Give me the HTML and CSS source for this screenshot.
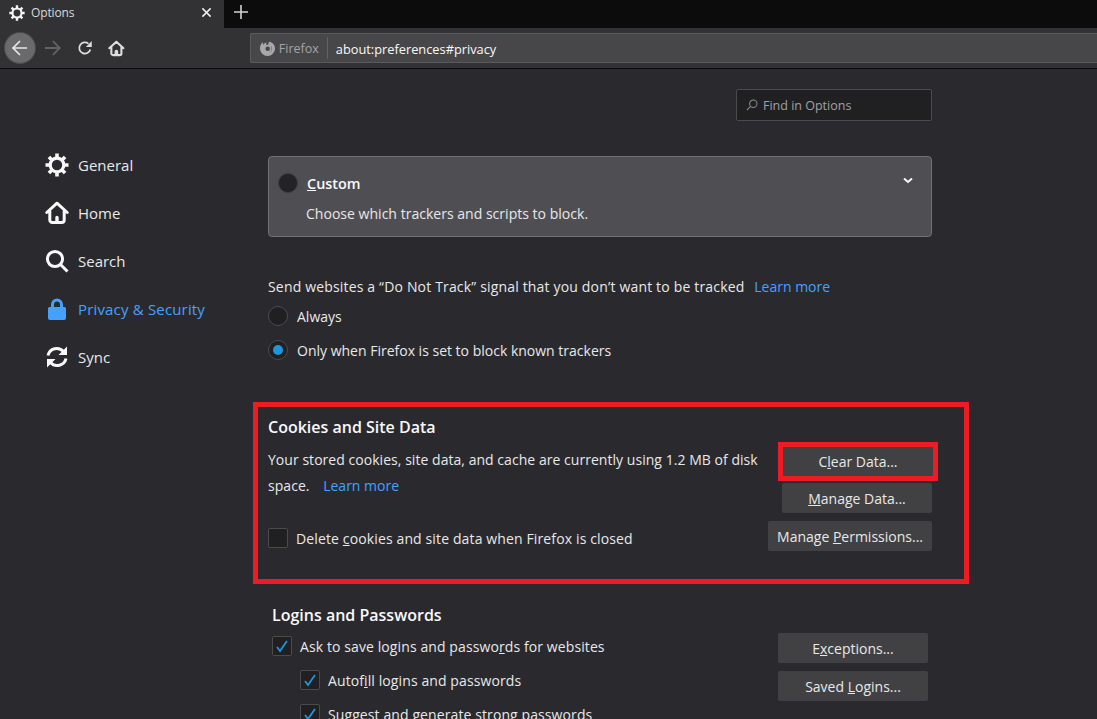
FILE: index.html
```html
<!DOCTYPE html>
<html lang="en">
<head>
    <meta charset="UTF-8">
    <title>Options</title>
    <link rel="stylesheet" href="styles.css">
</head>
<body>

    <!-- Tab strip -->
    <div class="tabbar">
        <div class="tab">
            <svg class="tab-icon" viewBox="0 0 24 24"><use href="#gear"/></svg>
            <span class="tab-title">Options</span>
            <svg class="tab-close" viewBox="0 0 12 12"><path d="M1.5 1.5l9 9M10.5 1.5l-9 9"/></svg>
        </div>
        <svg class="tab-new" viewBox="0 0 14 14"><path d="M7 0v14M0 7h14"/></svg>
    </div>

    <!-- Toolbar -->
    <div class="toolbar">
        <div class="back-btn">
            <svg viewBox="0 0 18 18"><path d="M16 9H2M9 2L2 9l7 7"/></svg>
        </div>
        <svg class="tool fwd" viewBox="0 0 18 18"><path d="M1 9h15M9 2l7 7-7 7"/></svg>
        <svg class="tool reload" viewBox="0 0 16 16"><path d="M13.5 9.5A5.7 5.7 0 1 1 11.6 3.6"/><path class="fill" d="M15 1v6H9z"/></svg>
        <svg class="tool home" viewBox="0 0 24 24"><use href="#house"/></svg>
        <div class="urlbar">
            <svg class="fx-icon" viewBox="0 0 18 18"><path fill-rule="evenodd" d="M4.300 1.500C4 3 4.200 4.200 4.700 5 5.300 3.800 6.500 3 8 2.700c-.5 1-.5 1.800 0 2.500.4-.2.800-.3 1.200-.3a4.200 4.200 0 0 1 1.300 8.200c2-.2 3.400-1.800 3.400-3.800 0-2.200-1.700-3.900-3.900-3.900-.3-1.300 0-2.500 1-3.600 3.600.7 6 3.700 6 7.200a8 8 0 1 1-16 0c0-3 1.300-5.300 3.300-7zM9.200 6.800a2.400 2.400 0 1 0 0 4.800 2.400 2.400 0 0 0 0-4.800z"/></svg>
            <span class="fx-label">Firefox</span>
            <span class="url-sep"></span>
            <span class="url-text">about:preferences#privacy</span>
        </div>
    </div>

    <div class="page">
        <!-- Left categories -->
        <nav class="sidebar">
            <a class="cat">
                <svg viewBox="0 0 24 24"><use href="#gear"/></svg>General
            </a>
            <a class="cat">
                <svg viewBox="0 0 24 24"><use href="#house"/></svg>Home
            </a>
            <a class="cat">
                <svg viewBox="0 0 24 24"><circle class="line" cx="10" cy="10" r="7.600"/><path class="line" d="M15.500 15.500L22.500 22.500"/></svg>Search
            </a>
            <a class="cat active">
                <svg viewBox="0 0 24 24"><path class="solid" fill-rule="evenodd" d="M6 10V7.500a6 6 0 0 1 12 0V10h1.500A1.500 1.500 0 0 1 21 11.500V21a2 2 0 0 1-2 2H5a2 2 0 0 1-2-2v-9.500A1.500 1.500 0 0 1 4.500 10zM9 10h6V7.500a3 3 0 0 0-6 0z"/></svg>Privacy &amp; Security
            </a>
            <a class="cat">
                <svg viewBox="0 0 24 24"><path class="line" d="M3 10.500A9 9 0 0 1 18.500 6.500L20 8M21 13.500A9 9 0 0 1 5.500 17.500L4 16"/><path class="solid" d="M22 1.500v8.500h-8.500zM2 22.500V14h8.500z"/></svg>Sync
            </a>
        </nav>

        <main class="content">
            <div class="find-row">
                <div class="find-box">
                    <svg viewBox="0 0 14 14"><circle cx="8.500" cy="5.500" r="4.300"/><path d="M5.300 8.700L1 13"/></svg>
                    <span>Find in Options</span>
                </div>
            </div>

            <div class="custom-card">
                <div class="custom-head">
                    <span class="custom-radio"></span>
                    <b class="custom-title"><u>C</u>ustom</b>
                    <svg class="chevron" viewBox="0 0 10 7"><path d="M1 1.500l4 3.500 4-3.500"/></svg>
                </div>
                <p class="custom-desc">Choose which trackers and scripts to block.</p>
            </div>

            <div class="dnt">
                <p class="dnt-text">Send websites a “Do Not Track” signal that you don’t want to be tracked <a class="link">Learn more</a></p>
                <label class="option"><span class="radio"></span><span>Always</span></label>
                <label class="option"><span class="radio checked"></span><span>Only when Firefox is set to block known trackers</span></label>
            </div>

            <section class="cookies">
                <h2>Cookies and Site Data</h2>
                <div class="cookies-body">
                    <div class="cookies-left">
                        <p class="cookies-text">Your stored cookies, site data, and cache are currently using 1.2 MB of disk space. <a class="link">Learn more</a></p>
                        <label class="option del"><span class="box"></span><span>Delete <u>c</u>ookies and site data when Firefox is closed</span></label>
                    </div>
                    <div class="cookies-btns">
                        <div class="clear-frame">
                            <button class="btn btn-clear">C<u>l</u>ear Data...</button>
                        </div>
                        <button class="btn btn-data"><u>M</u>anage Data...</button>
                        <button class="btn btn-perm">Manage <u>P</u>ermissions...</button>
                    </div>
                </div>
            </section>

            <section class="logins">
                <div class="logins-left">
                    <h2>Logins and Passwords</h2>
                    <label class="option"><span class="box on"><svg viewBox="0 0 14 14"><path d="M2 8l3 4 7-10"/></svg></span><span>Ask to save logins and passwo<u>r</u>ds for websites</span></label>
                    <label class="option sub"><span class="box on"><svg viewBox="0 0 14 14"><path d="M2 8l3 4 7-10"/></svg></span><span>Autof<u>i</u>ll logins and passwords</span></label>
                    <label class="option sub"><span class="box on"><svg viewBox="0 0 14 14"><path d="M2 8l3 4 7-10"/></svg></span><span>Suggest and generate strong passwords</span></label>
                </div>
                <div class="logins-btns">
                    <button class="btn">E<u>x</u>ceptions...</button>
                    <button class="btn">Saved <u>L</u>ogins...</button>
                </div>
            </section>
        </main>
    </div>

    <svg class="defs" width="0" height="0">
        <symbol id="gear" viewBox="0 0 24 24">
            <circle cx="12" cy="12" r="6.800" fill="none" stroke="currentColor" stroke-width="3.200"/>
            <path fill="none" stroke="currentColor" stroke-width="3.600" d="M12 .5v4M12 19.500v4M.5 12h4M19.500 12h4M3.900 3.900l2.900 2.900M17.200 17.200l2.900 2.900M3.900 20.100l2.900-2.900M17.200 6.800l2.900-2.900"/>
        </symbol>
        <symbol id="house" viewBox="0 0 24 24">
            <path fill="none" stroke="currentColor" stroke-width="3" stroke-linecap="round" stroke-linejoin="round" d="M1.800 11.500L12 2.200l10.200 9.300M4.800 10v9a2.500 2.500 0 0 0 2.500 2.500h9.400a2.500 2.500 0 0 0 2.500-2.500v-9"/>
            <path fill="currentColor" d="M10.300 22v-5.500a1.700 1.700 0 0 1 3.400 0V22z"/>
        </symbol>
    </svg>

</body>
</html>
```

FILE: styles.css
```css
/* General styling */
* {
    margin: 0;
    padding: 0;
    box-sizing: border-box;
}

html, body {
    height: 719px;
    overflow: hidden;
}

body {
    background-color: #2a2a2e;
    color: #f9f9fa;
    font-family: "Open Sans", "Noto Sans", sans-serif;
    font-size: 14px;
}

.defs {
    position: absolute;
}

/* Tab strip */
.tabbar {
    display: flex;
    align-items: center;
    height: 28px;
    background-color: #0c0c0d;
}

.tab {
    display: flex;
    align-items: center;
    width: 224px;
    height: 28px;
    padding: 0 12px 3px 9px;
    background-color: #323234;
}

.tab-icon {
    width: 16px;
    height: 16px;
    color: #f4f4f4;
    margin-right: 6px;
}

.tab-title {
    flex-grow: 1;
    font-size: 12px;
    letter-spacing: -0.15px;
    color: #d8d8d8;
}

.tab-close {
    width: 11px;
    height: 11px;
    fill: none;
    stroke: #f0f0f0;
    stroke-width: 1.6;
}

.tab-new {
    width: 14px;
    height: 14px;
    margin-left: 10px;
    margin-top: -5px;
    fill: none;
    stroke: #d4d4d4;
    stroke-width: 1.6;
}

/* Toolbar */
.toolbar {
    display: flex;
    align-items: center;
    height: 41px;
    padding-left: 4px;
    background-color: #323234;
    border-bottom: 1px solid #0c0c0d;
}

.back-btn {
    display: flex;
    align-items: center;
    justify-content: center;
    width: 32px;
    height: 32px;
    border-radius: 50%;
    background-color: #6a6a6c;
    border: 1px solid #4b4b4d;
}

.back-btn svg {
    width: 18px;
    height: 18px;
    fill: none;
    stroke: #e6e6e6;
    stroke-width: 1.7;
}

.tool {
    fill: none;
    stroke: #dedede;
    stroke-width: 1.8;
}

.tool .fill {
    fill: #dedede;
    stroke: none;
}

.fwd {
    width: 18px;
    height: 18px;
    margin-left: 8px;
    stroke: #636365;
}

.reload {
    width: 16px;
    height: 16px;
    margin-left: 16px;
}

.home {
    width: 17px;
    height: 17px;
    margin-left: 15px;
    color: #dedede;
}

.urlbar {
    display: flex;
    align-items: center;
    width: 860px;
    height: 30px;
    margin-left: 125px;
    padding-left: 8px;
    background-color: #474749;
    border: 1px solid #5a5a5c;
    border-right: none;
    border-radius: 2px 0 0 2px;
}

.fx-icon {
    width: 17px;
    height: 17px;
    fill: #a8a8aa;
}

.fx-label {
    margin-left: 3px;
    font-size: 12.500px;
    color: #a4a4a6;
}

.url-sep {
    width: 1px;
    height: 22px;
    margin: 0 8px;
    background-color: #636365;
}

.url-text {
    padding-top: 1px;
    font-size: 12.800px;
    color: #f9f9fa;
}

/* Page layout */
.page {
    display: flex;
}

.sidebar {
    width: 268px;
    padding: 72px 0 0 45px;
}

.cat {
    display: flex;
    align-items: center;
    height: 48px;
    font-size: 15px;
    color: #e8e8e9;
}

.cat svg {
    width: 24px;
    height: 24px;
    margin-right: 9px;
    color: #f9f9fa;
}

.cat .solid {
    fill: currentColor;
}

.cat .line {
    fill: none;
    stroke: currentColor;
    stroke-width: 3;
}

.cat.active {
    color: #45a1ff;
    letter-spacing: 0.17px;
}

.cat.active svg {
    color: #45a1ff;
}

.content {
    width: 664px;
}

/* Find in options */
.find-row {
    display: flex;
    justify-content: flex-end;
    padding-top: 20px;
}

.find-box {
    display: flex;
    align-items: center;
    width: 196px;
    height: 32px;
    padding-left: 9px;
    background-color: #202023;
    border: 1px solid #4b4b4d;
    border-radius: 2px;
    font-size: 12.500px;
    color: #a0a0a2;
}

.find-box svg {
    width: 12px;
    height: 12px;
    margin-right: 5px;
    fill: none;
    stroke: #8c8c8e;
    stroke-width: 1.2;
}

/* Custom tracking card */
.custom-card {
    height: 81px;
    margin-top: 35px;
    padding: 14px 10px 0 9px;
    background-color: #4f4f53;
    border: 1px solid #727274;
    border-radius: 4px;
}

.custom-head {
    display: flex;
    align-items: center;
    height: 24px;
}

.custom-radio {
    width: 20px;
    height: 20px;
    border-radius: 50%;
    background-color: #232325;
    border: 1px solid #3c3c3e;
}

.custom-title {
    flex-grow: 1;
    margin-left: 9px;
    font-size: 14.400px;
    font-weight: 600;
}

.chevron {
    width: 10px;
    height: 7px;
    margin-right: 8px;
    margin-top: -6px;
    fill: none;
    stroke: #f9f9fa;
    stroke-width: 2;
}

.custom-desc {
    margin: 9px 0 0 28px;
    font-size: 14.050px;
    color: #e8e8e9;
}

/* Do not track */
.dnt {
    margin-top: 38px;
}

.dnt-text {
    line-height: 24px;
    letter-spacing: 0.17px;
    color: #e8e8e9;
}

.link {
    margin-left: 6px;
    letter-spacing: 0;
    color: #45a1ff;
}

.option {
    display: flex;
    align-items: center;
    height: 34px;
    color: #e8e8e9;
}

.radio {
    display: flex;
    align-items: center;
    justify-content: center;
    width: 20px;
    height: 20px;
    margin-right: 9px;
    border-radius: 50%;
    background-color: #202023;
    border: 1px solid #4b4b4d;
}

.radio.checked::after {
    content: "";
    width: 10px;
    height: 10px;
    border-radius: 50%;
    background-color: #1f95de;
}

.box {
    display: flex;
    align-items: center;
    justify-content: center;
    width: 20px;
    height: 20px;
    margin-right: 8px;
    background-color: #202023;
    border: 1px solid #4b4b4d;
    border-radius: 2px;
}

.box svg {
    width: 14px;
    height: 14px;
    fill: none;
    stroke: #1f95de;
    stroke-width: 1.8;
}

/* Cookies section, the red frames are part of the screenshot */
.cookies {
    height: 182px;
    margin: 35px -37px 0 -15px;
    padding: 8px 32px 0 10px;
    border: 5px solid #ed1c24;
}

h2 {
    font-size: 16px;
    font-weight: 600;
    line-height: 24px;
    color: #f9f9fa;
}

.cookies-body {
    display: flex;
    justify-content: space-between;
}

.cookies-left {
    width: 500px;
}

.cookies-text {
    margin-top: 8px;
    line-height: 26px;
    letter-spacing: 0.04px;
    color: #e8e8e9;
}

.cookies-text .link {
    margin-left: 10px;
}

.del {
    margin-top: 22px;
    letter-spacing: 0.13px;
}

.cookies-btns {
    display: flex;
    flex-direction: column;
    align-items: flex-end;
    flex-shrink: 0;
    margin-top: 3px;
    gap: 8px;
}

.btn {
    height: 30px;
    padding: 0 9px;
    background-color: #414143;
    border: none;
    border-radius: 2px;
    font-family: inherit;
    font-size: 14px;
    white-space: nowrap;
    color: #e8e8e9;
}

.clear-frame {
    width: 160px;
    height: 39px;
    margin-right: -6px;
    margin-bottom: -6px;
    border: 5px solid #ed1c24;
}

.btn-clear {
    display: block;
    width: 150px;
    height: 29px;
    border-radius: 0;
}

.btn-data {
    width: 150px;
}

/* Logins section */
.logins {
    display: flex;
    justify-content: space-between;
    margin: 19px 4px 0 4px;
}

.logins h2 {
    margin-bottom: 2px;
}

.logins .option {
    letter-spacing: 0.1px;
}

.logins .sub {
    margin-left: 28px;
}

.logins-btns {
    display: flex;
    flex-direction: column;
    gap: 8px;
    padding-top: 30px;
}

.logins-btns .btn {
    width: 150px;
}
```
